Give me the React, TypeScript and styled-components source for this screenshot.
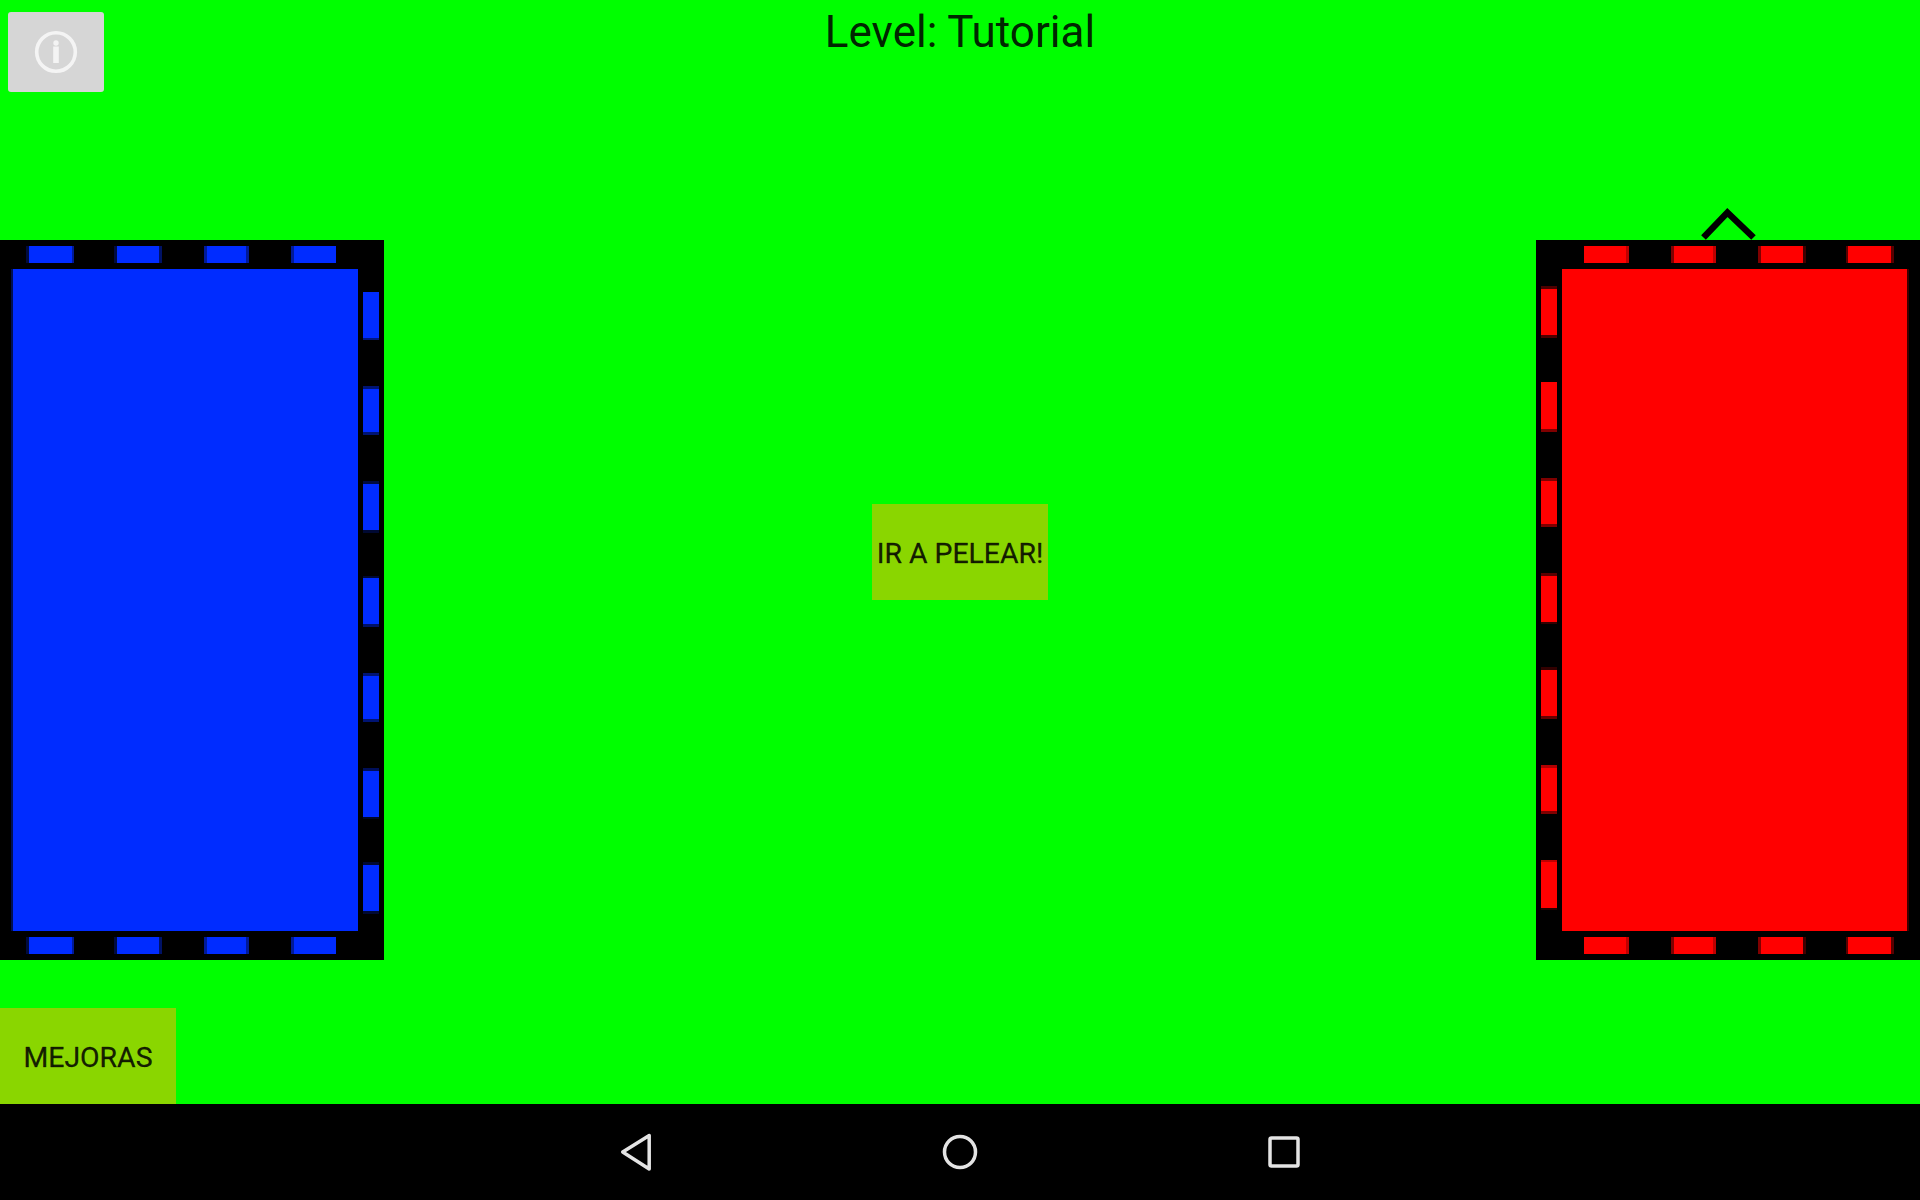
import React from "react";
import styled, { createGlobalStyle } from "styled-components";

const Global = createGlobalStyle`
  html, body { margin: 0; padding: 0; height: 100%; background: #00ff00; }
  #root { height: 100%; }
`;

const Screen = styled.div`
  width: 1920px; height: 1200px; display: grid; grid-template-rows: 1fr 96px;
  font-family: Roboto, sans-serif; overflow: hidden;
`;
const Stage = styled.main`
  background: #00ff00; display: grid; grid-template-rows: 240px 720px 48px 96px; position: relative;
`;
const Header = styled.header`
  display: grid; grid-template-columns: 1fr auto 1fr; align-items: start;
`;
const Title = styled.h1`
  margin: 6px 0 0; font: 400 44px/52px Roboto, sans-serif; color: rgba(0,0,0,.87); grid-column: 2;
`;
const InfoButton = styled.button`
  grid-column: 1; grid-row: 1; justify-self: start; margin: 12px 0 0 8px; width: 96px; height: 80px; padding: 0;
  border: 0; border-radius: 3px; background: #d6d6d6; display: flex; align-items: center; justify-content: center;
`;
const Middle = styled.section`
  display: flex; justify-content: space-between; align-items: center;
`;
const Fort = styled.div<{ $side: "left" | "right" }>`
  position: relative; width: 384px; height: 720px; background: #000; display: grid;
  grid-template-rows: 29px 662px 29px;
  grid-template-columns: ${p => (p.$side === "left" ? "358px 26px" : "26px 358px")};
`;
const HRow = styled.div<{ $pad: number; $rowPos: number }>`
  grid-column: 1 / -1; grid-row: ${p => p.$rowPos}; display: flex; align-items: flex-start;
  padding-top: 6px; padding-left: ${p => p.$pad}px;
`;
const VCol = styled.div<{ $pad: number; $col: number; $top: number }>`
  grid-row: 2; grid-column: ${p => p.$col}; display: flex; flex-direction: column;
  padding-left: ${p => p.$pad}px; padding-top: ${p => p.$top}px;
`;
const Field = styled.div<{ $color: string; $shade: string; $side: "left" | "right" }>`
  grid-row: 2; grid-column: ${p => (p.$side === "left" ? 1 : 2)};
  margin: ${p => (p.$side === "left" ? "0 0 0 11px" : "0 11px 0 0")};
  background: ${p => p.$color};
  ${p => (p.$side === "left" ? `border-left: 2px solid ${p.$shade};` : `border-right: 2px solid ${p.$shade};`)}
`;
const DashH = styled.span<{ $w: number; $gap: number; $c: string; $a: number; $aw: number; $b: number; $bw: number }>`
  flex: none; box-sizing: border-box; height: 17px; width: ${p => p.$w}px; margin-right: ${p => p.$gap}px;
  background: ${p => p.$c};
  border-left: ${p => p.$aw}px solid ${p => `color-mix(in srgb, ${p.$c} ${p.$a}%, #000)`};
  border-right: ${p => p.$bw}px solid ${p => `color-mix(in srgb, ${p.$c} ${p.$b}%, #000)`};
`;
const DashV = styled.span<{ $h: number; $gap: number; $c: string; $a: number; $aw: number; $b: number; $bw: number }>`
  flex: none; box-sizing: border-box; width: 16px; height: ${p => p.$h}px; margin-bottom: ${p => p.$gap}px;
  background: ${p => p.$c};
  border-top: ${p => p.$aw}px solid ${p => `color-mix(in srgb, ${p.$c} ${p.$a}%, #000)`};
  border-bottom: ${p => p.$bw}px solid ${p => `color-mix(in srgb, ${p.$c} ${p.$b}%, #000)`};
`;
const Chevron = styled.svg`
  position: absolute; left: 160px; top: -36px; width: 60px; height: 36px; overflow: hidden;
`;
const ActionRow = styled.div<{ $justify: string }>`
  display: flex; justify-content: ${p => p.$justify};
`;
const Action = styled.button`
  box-sizing: border-box; width: 176px; height: 96px; padding: 3px 0 0; border: 0; background: #8ad600; color: rgba(0,0,0,.87);
  font: 400 28.4px/32px Roboto, sans-serif; -webkit-text-stroke: 0.35px rgba(0,0,0,.7);
  white-space: nowrap; display: flex; align-items: center; justify-content: center;
`;
const CenterAction = styled(ActionRow)`
  position: absolute; left: 0; right: 0; top: 504px;
`;
const NavBar = styled.nav`
  background: #000; display: flex; align-items: center; justify-content: center; gap: 248px;
`;
const NavIcon = styled.svg`
  width: 76px; height: 76px; fill: none; stroke: #e4e4e4; stroke-width: 3.5; stroke-linejoin: round;
`;

const topBlue = [
  { w: 48, gap: 40, a: 25, aw: 3, b: 60, bw: 2 },
  { w: 48, gap: 42, a: 25, aw: 3, b: 40, bw: 3 },
  { w: 45, gap: 42, a: 60, aw: 3, b: 60, bw: 3 },
  { w: 45, gap: 0, a: 60, aw: 3, b: 100, bw: 0 },
];
const topRed = [
  { w: 45, gap: 42, a: 100, aw: 0, b: 75, bw: 3 },
  { w: 45, gap: 42, a: 50, aw: 3, b: 75, bw: 3 },
  { w: 48, gap: 40, a: 50, aw: 3, b: 25, bw: 3 },
  { w: 48, gap: 0, a: 35, aw: 2, b: 35, bw: 3 },
];
const sideBlue = [
  { h: 48, gap: 46, a: 100, aw: 0, b: 50, bw: 2 },
  { h: 49, gap: 46, a: 45, aw: 3, b: 45, bw: 3 },
  { h: 52, gap: 43, a: 25, aw: 3, b: 20, bw: 3 },
  { h: 51, gap: 46, a: 20, aw: 2, b: 40, bw: 3 },
  { h: 49, gap: 46, a: 45, aw: 3, b: 45, bw: 3 },
  { h: 51, gap: 43, a: 35, aw: 3, b: 15, bw: 2 },
  { h: 52, gap: 0, a: 20, aw: 3, b: 20, bw: 3 },
];
const sideRed = [
  { h: 52, gap: 44, a: 30, aw: 3, b: 30, bw: 3 },
  { h: 50, gap: 46, a: 100, aw: 0, b: 50, bw: 3 },
  { h: 49, gap: 46, a: 50, aw: 3, b: 50, bw: 3 },
  { h: 51, gap: 43, a: 35, aw: 3, b: 20, bw: 2 },
  { h: 52, gap: 46, a: 20, aw: 3, b: 40, bw: 3 },
  { h: 49, gap: 46, a: 70, aw: 3, b: 50, bw: 3 },
  { h: 50, gap: 0, a: 75, aw: 2, b: 15, bw: 2 },
];

function FortView({ side }: { side: "left" | "right" }) {
  const left = side === "left";
  const color = left ? "#002cff" : "#ff0000";
  const shade = left ? "#001050" : "#3a0000";
  const top = left ? topBlue : topRed;
  const sideDashes = left ? sideBlue : sideRed;
  const pad = left ? 26 : 48;
  const row = (r: number) => (
    <HRow $pad={pad} $rowPos={r}>
      {top.map((d, i) => <DashH key={i} $c={color} {...{ $w: d.w, $gap: d.gap, $a: d.a, $aw: d.aw, $b: d.b, $bw: d.bw }} />)}
    </HRow>
  );
  return (
    <Fort $side={side}>
      {row(1)}
      <Field $color={color} $shade={shade} $side={side} />
      <VCol $col={left ? 2 : 1} $pad={5} $top={left ? 23 : 17}>
        {sideDashes.map((d, i) => <DashV key={i} $c={color} {...{ $h: d.h, $gap: d.gap, $a: d.a, $aw: d.aw, $b: d.b, $bw: d.bw }} />)}
      </VCol>
      {row(3)}
      {!left && (
        <Chevron viewBox="0 0 60 36">
          <path d="M7.5 33.5 L31.4 8.5 L57.5 33.5" fill="none" stroke="#000" strokeWidth="6.5" />
        </Chevron>
      )}
    </Fort>
  );
}

export default function App() {
  return (
    <Screen>
      <Global />
      <Stage>
        <Header>
          <InfoButton aria-label="info">
            <svg width="44" height="44" viewBox="0 0 44 44" fill="none">
              <circle cx="22" cy="22" r="19.3" stroke="#f4f4f4" strokeWidth="3.6" />
              <rect x="19.2" y="16.5" width="5.6" height="16.5" fill="#f4f4f4" />
              <circle cx="22" cy="13" r="2.7" fill="#f4f4f4" />
            </svg>
          </InfoButton>
          <Title>Level: Tutorial</Title>
        </Header>
        <Middle>
          <FortView side="left" />
          <FortView side="right" />
        </Middle>
        <div />
        <ActionRow $justify="flex-start"><Action>MEJORAS</Action></ActionRow>
        <CenterAction $justify="center"><Action>IR A PELEAR!</Action></CenterAction>
      </Stage>
      <NavBar>
        <NavIcon viewBox="0 0 76 76"><path d="M51.2 21.5 V55 L24.7 38 Z" /></NavIcon>
        <NavIcon viewBox="0 0 76 76"><circle cx="38" cy="38" r="15.5" /></NavIcon>
        <NavIcon viewBox="0 0 76 76"><rect x="24" y="24" width="28" height="28" rx="1.5" /></NavIcon>
      </NavBar>
    </Screen>
  );
}
